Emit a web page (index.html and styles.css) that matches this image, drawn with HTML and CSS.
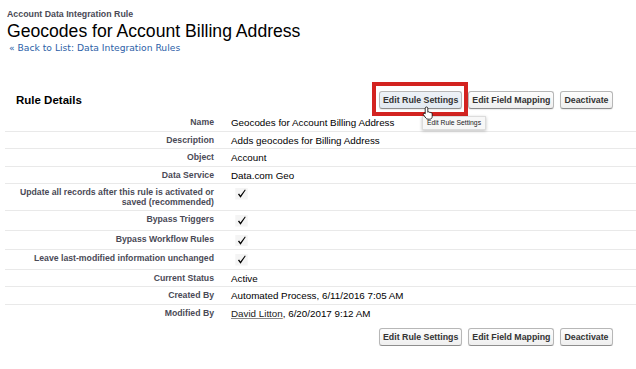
FILE: index.html
```html
<!doctype html>
<html>
<head>
<meta charset="utf-8">
<meta name="viewport" content="width=device-width, initial-scale=1">
<title>Geocodes for Account Billing Address</title>
<link rel="stylesheet" href="styles.css">
</head>

<body>
<div class="ptHeader">
	<div class="ptType">Account Data Integration Rule</div>
	<h1 class="pageTitle">Geocodes for Account Billing Address</h1>
	<div class="ptBreadcrumb"><a href="#">« Back to List: Data Integration Rules</a></div>
</div>

<div class="pageBlock">
	<div class="pbHeader">
		<h2 class="pbTitle">Rule Details</h2>
		<div class="pbButtons">
			<span class="btnWrap highlight">
				<button class="btn btnHover">Edit Rule Settings</button>
				<span class="tooltip">Edit Rule Settings</span>
				<svg class="cursor" width="12" height="14" viewBox="0 0 12 14"><path d="M4.5 1C5.3 1 5.8 1.5 5.8 2.2V6.2C6.3 5.6 7.2 5.7 7.4 6.3C8 6 8.7 6.2 8.8 6.8C9.4 6.6 10.2 6.9 10.2 7.6V10.5C10.2 12 9.2 13.2 7.6 13.2H6C5 13.2 4.4 12.8 3.8 12L1.5 8.8C1.1 8.3 1.3 7.6 1.9 7.4C2.4 7.2 2.9 7.4 3.2 7.8V2.2C3.2 1.5 3.7 1 4.5 1Z" fill="#fff" stroke="#000" stroke-width="0.8"/></svg>
			</span>
			<button class="btn">Edit Field Mapping</button>
			<button class="btn">Deactivate</button>
		</div>
	</div>

	<div class="detailList">
		<div class="labelCol">Name</div>
		<div class="dataCol">Geocodes for Account Billing Address</div>
		<div class="labelCol">Description</div>
		<div class="dataCol">Adds geocodes for Billing Address</div>
		<div class="labelCol">Object</div>
		<div class="dataCol">Account</div>
		<div class="labelCol">Data Service</div>
		<div class="dataCol">Data.com Geo</div>
		<div class="labelCol">Update all records after this rule is activated or saved (recommended)</div>
		<div class="dataCol"><svg class="checkImg" width="13" height="11.5" viewBox="0 0 13 12"><rect x="0" y="0" width="13" height="12" fill="#f4f4f4"/><path d="M2.8 6.5L4 5.8L5.4 7.7L10.1 1.5L10.9 2.2L5.5 10.3Z" fill="#000"/></svg></div>
		<div class="labelCol">Bypass Triggers</div>
		<div class="dataCol"><svg class="checkImg" width="13" height="11.5" viewBox="0 0 13 12"><rect x="0" y="0" width="13" height="12" fill="#f4f4f4"/><path d="M2.8 6.5L4 5.8L5.4 7.7L10.1 1.5L10.9 2.2L5.5 10.3Z" fill="#000"/></svg></div>
		<div class="labelCol">Bypass Workflow Rules</div>
		<div class="dataCol"><svg class="checkImg" width="13" height="11.5" viewBox="0 0 13 12"><rect x="0" y="0" width="13" height="12" fill="#f4f4f4"/><path d="M2.8 6.5L4 5.8L5.4 7.7L10.1 1.5L10.9 2.2L5.5 10.3Z" fill="#000"/></svg></div>
		<div class="labelCol">Leave last-modified information unchanged</div>
		<div class="dataCol"><svg class="checkImg" width="13" height="11.5" viewBox="0 0 13 12"><rect x="0" y="0" width="13" height="12" fill="#f4f4f4"/><path d="M2.8 6.5L4 5.8L5.4 7.7L10.1 1.5L10.9 2.2L5.5 10.3Z" fill="#000"/></svg></div>
		<div class="labelCol">Current Status</div>
		<div class="dataCol">Active</div>
		<div class="labelCol">Created By</div>
		<div class="dataCol">Automated Process, 6/11/2016 7:05 AM</div>
		<div class="labelCol last">Modified By</div>
		<div class="dataCol last"><a class="userLink" href="#">David Litton</a>, 6/20/2017 9:12 AM</div>
	</div>

	<div class="pbFooter">
		<div class="pbButtons">
			<button class="btn">Edit Rule Settings</button>
			<button class="btn">Edit Field Mapping</button>
			<button class="btn">Deactivate</button>
		</div>
	</div>
</div>
</body>
</html>
```

FILE: styles.css
```css
body {
	margin: 0;
	background: #fff;
	font-family: "Liberation Sans", Arial, sans-serif;
	color: #000;
}
.ptHeader {
	padding-left: 7px;
}
.ptType {
	margin-top: 9px;
	font-size: 8.8px;
	font-weight: bold;
	line-height: 11px;
	color: #4a4a56;
}
.pageTitle {
	margin: 1px 0 0 0;
	font-size: 17.6px;
	font-weight: normal;
	line-height: 20px;
}
.ptBreadcrumb {
	margin: 1px 0 0 2px;
	font-family: "DejaVu Sans", Verdana, sans-serif;
	font-size: 9.2px;
	line-height: 11px;
}
.ptBreadcrumb a {
	color: #2d5fa8;
	text-decoration: none;
}
.pageBlock {
	margin: 38px 0 0 5px;
}
.pbHeader,
.pbFooter {
	display: grid;
	grid-template-columns: 363px auto;
	align-items: center;
	padding-left: 11px;
}
.pbHeader {
	padding-bottom: 5px;
}
.pbFooter {
	margin-top: 7px;
}
.pbFooter .pbButtons {
	grid-column: 2;
}
.pbTitle {
	margin: 0;
	font-size: 11.5px;
	font-weight: bold;
	line-height: 18px;
}
.pbButtons {
	display: flex;
	gap: 6px;
}
.btn {
	height: 18px;
	margin: 0;
	padding: 0 3px;
	font-family: "Liberation Sans", Arial, sans-serif;
	font-size: 8.8px;
	font-weight: bold;
	line-height: 16px;
	color: #333;
	background: linear-gradient(#fdfdfd, #efefef);
	border: 1px solid #b7b7b7;
	border-bottom-color: #8e8e8e;
	border-radius: 3px;
	box-shadow: 0 1px 1px rgba(0, 0, 0, 0.08);
}
.btnHover {
	background: linear-gradient(#edf2f7, #e2e9f1);
}
.btnWrap {
	position: relative;
	display: flex;
}
.highlight::before {
	content: "";
	position: absolute;
	left: -7px;
	top: -9px;
	right: -6px;
	bottom: -7px;
	border: 4px solid #d32320;
}
.tooltip {
	position: absolute;
	left: 43px;
	top: 25px;
	z-index: 1;
	padding: 0 4px;
	font-size: 6.8px;
	line-height: 12px;
	white-space: nowrap;
	color: #222;
	background: #f7f7f7;
	border: 1px solid #dcdcdc;
	box-shadow: 0 1px 3px rgba(0, 0, 0, 0.25);
}
.cursor {
	position: absolute;
	left: 43px;
	top: 15px;
	z-index: 2;
}
.detailList {
	display: grid;
	grid-template-columns: 216px 1fr;
}
.labelCol,
.dataCol {
	padding-top: 4px;
	padding-bottom: 3px;
	border-bottom: 1px solid #e9e9e9;
}
.labelCol {
	padding-right: 7px;
	text-align: right;
	font-size: 8.7px;
	font-weight: bold;
	line-height: 9.5px;
	color: #4a4a56;
}
.dataCol {
	padding-left: 10px;
	font-size: 9.8px;
	line-height: 9.5px;
}
.labelCol.last,
.dataCol.last {
	border-bottom: 0;
}
.checkImg {
	display: block;
	margin-left: 4px;
}
.userLink {
	color: #222;
	text-decoration: underline;
	text-decoration-color: #888;
}
```
